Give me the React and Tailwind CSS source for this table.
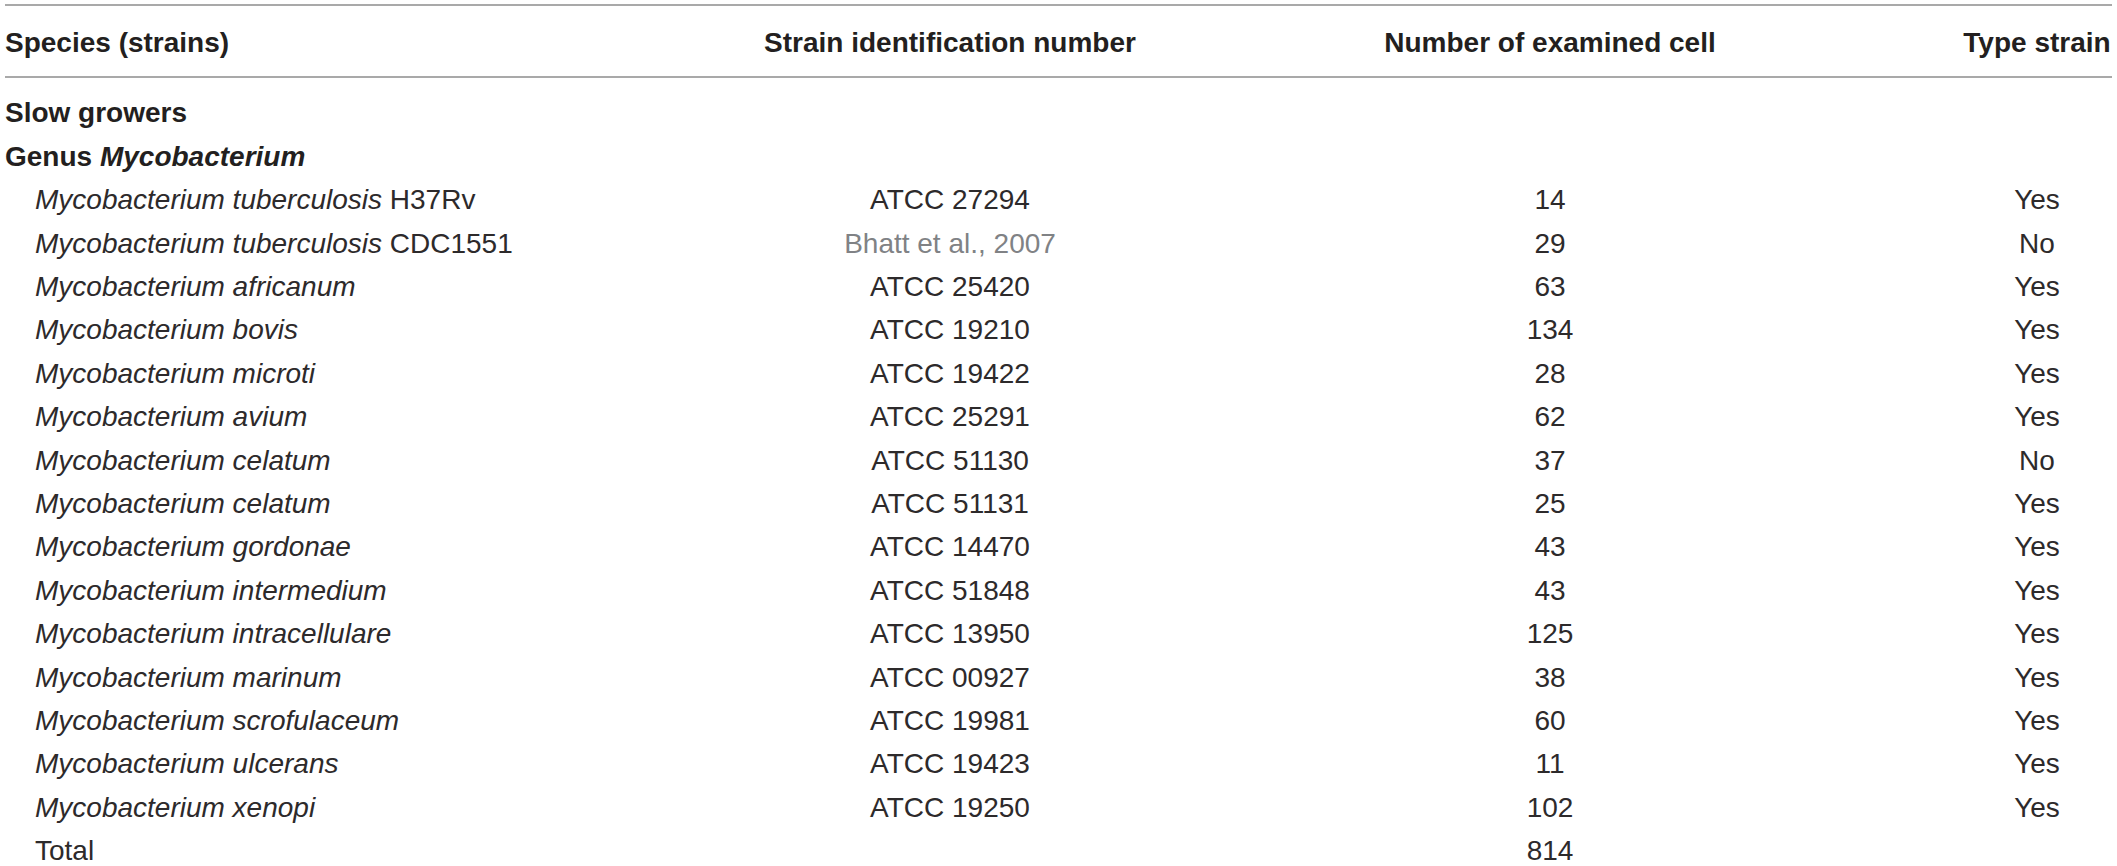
import React from "react";

const rows = [
  { name: "Mycobacterium tuberculosis", suffix: "H37Rv", id: "ATCC 27294", cells: 14, type: "Yes" },
  { name: "Mycobacterium tuberculosis", suffix: "CDC1551", id: "Bhatt et al., 2007", ref: true, cells: 29, type: "No" },
  { name: "Mycobacterium africanum", id: "ATCC 25420", cells: 63, type: "Yes" },
  { name: "Mycobacterium bovis", id: "ATCC 19210", cells: 134, type: "Yes" },
  { name: "Mycobacterium microti", id: "ATCC 19422", cells: 28, type: "Yes" },
  { name: "Mycobacterium avium", id: "ATCC 25291", cells: 62, type: "Yes" },
  { name: "Mycobacterium celatum", id: "ATCC 51130", cells: 37, type: "No" },
  { name: "Mycobacterium celatum", id: "ATCC 51131", cells: 25, type: "Yes" },
  { name: "Mycobacterium gordonae", id: "ATCC 14470", cells: 43, type: "Yes" },
  { name: "Mycobacterium intermedium", id: "ATCC 51848", cells: 43, type: "Yes" },
  { name: "Mycobacterium intracellulare", id: "ATCC 13950", cells: 125, type: "Yes" },
  { name: "Mycobacterium marinum", id: "ATCC 00927", cells: 38, type: "Yes" },
  { name: "Mycobacterium scrofulaceum", id: "ATCC 19981", cells: 60, type: "Yes" },
  { name: "Mycobacterium ulcerans", id: "ATCC 19423", cells: 11, type: "Yes" },
  { name: "Mycobacterium xenopi", id: "ATCC 19250", cells: 102, type: "Yes" },
];

const grid = "grid grid-cols-[695px_500px_700px_1fr]";

export default function App() {
  return (
    <div
      className="h-[866px] overflow-hidden bg-white pt-[4px] px-[5px] text-[#231f20]"
      style={{ fontFamily: '"Liberation Sans", Arial, sans-serif' }}
    >
      {/* header */}
      <div className={`${grid} border-y-2 border-[#a9a9a9] pt-[15px] pb-[11.6px] text-[28px] font-bold leading-[43.4px]`}>
        <div>Species (strains)</div>
        <div className="text-center">Strain identification number</div>
        <div className="text-center">Number of examined cell</div>
        <div className="pl-[62px] text-center">Type strain</div>
      </div>

      <div className="pt-[13.4px] leading-[43.4px]">
        <div className="text-[28px] font-bold">Slow growers</div>
        <div className="text-[28px] font-bold">
          Genus <i>Mycobacterium</i>
        </div>

        {rows.map((r, i) => (
          <div key={i} className={`${grid} text-[28px] text-[#2d2a2b]`}>
            <div className="pl-[30px]">
              <i>{r.name}</i>
              {r.suffix ? ` ${r.suffix}` : ""}
            </div>
            <div className={r.ref ? "text-center text-[#808285]" : "text-center"}>{r.id}</div>
            <div className="text-center">{r.cells}</div>
            <div className="pl-[62px] text-center">{r.type}</div>
          </div>
        ))}

        <div className={`${grid} text-[28px] text-[#2d2a2b]`}>
          <div className="pl-[30px]">Total</div>
          <div></div>
          <div className="text-center">814</div>
          <div></div>
        </div>
      </div>
    </div>
  );
}
